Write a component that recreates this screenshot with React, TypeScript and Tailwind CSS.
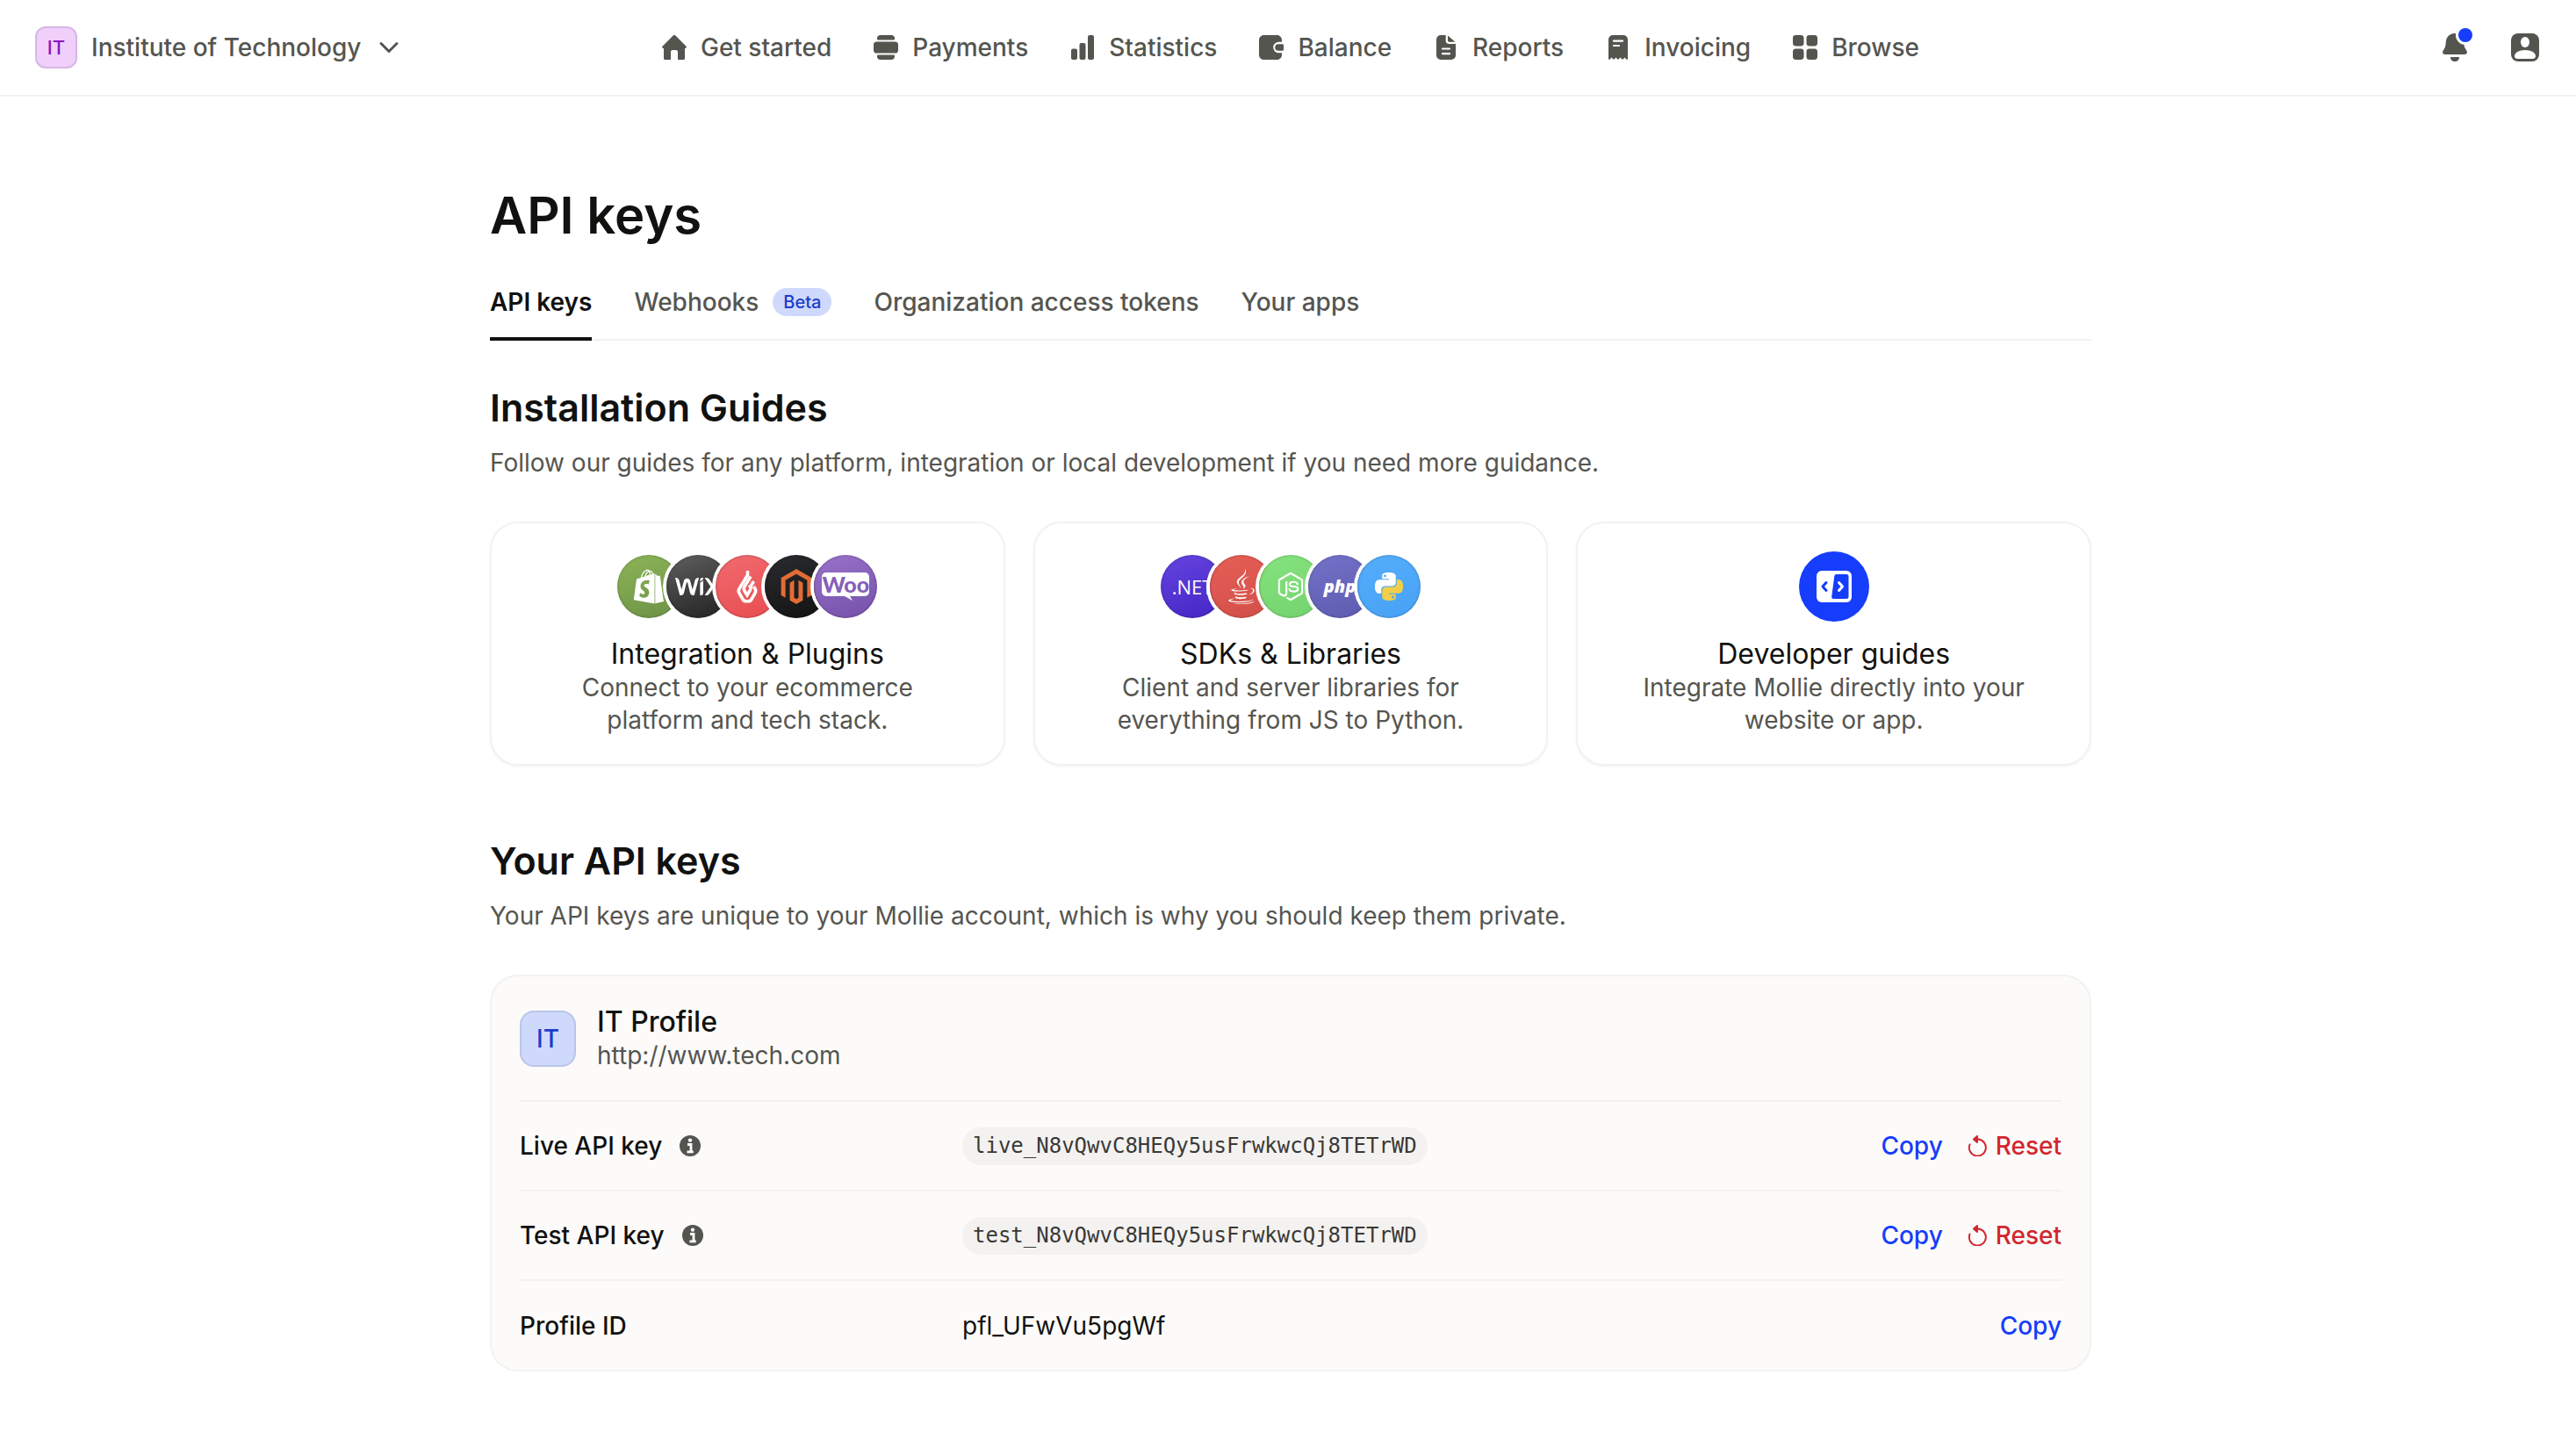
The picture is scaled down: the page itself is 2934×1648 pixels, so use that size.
import { ReactNode } from "react";
import { FaJava, FaMagento, FaShopify, FaWix } from "react-icons/fa";
import { SiNodedotjs } from "react-icons/si";

const HomeIcon = () => (
  <svg viewBox="0 0 28 28" className="size-7" fill="currentColor">
    <path d="M12.6.6a2 2 0 0 1 2.8 0l11.9 12a1.4 1.4 0 0 1-1 2.4H26v11.4c0 .9-.7 1.6-1.6 1.6H18v-9c0-1.2-.9-2-2-2h-4c-1.1 0-2 .8-2 2v9H3.6C2.700 28 2 27.300 2 26.400V15h-.3a1.400 1.400 0 0 1-1-2.400z" />
  </svg>
);

const PaymentsIcon = () => (
  <svg viewBox="0 0 28 28" className="size-7" fill="currentColor">
    <path d="M4 3.500C4 1.500 5.500 0 7.500 0h13c2 0 3.500 1.500 3.500 3.500V4.600a.9.9 0 0 1-.9.900H4.900a.9.9 0 0 1-.9-.9z" />
    <rect y="7.500" width="28" height="13" rx="3.600" />
    <path d="M4 23.400c0-.5.400-.9.900-.9h18.200c.5 0 .9.400.9.900v1.100c0 2-1.500 3.500-3.500 3.500h-13C5.500 28 4 26.500 4 24.500z" />
  </svg>
);

const StatisticsIcon = () => (
  <svg viewBox="0 0 28 28" className="size-7" fill="currentColor">
    <rect x="1" y="15.500" width="7" height="12.500" rx="2" />
    <rect x="10.500" y="9" width="7" height="19" rx="2" />
    <rect x="20" y="0" width="7" height="28" rx="2" />
  </svg>
);

const BalanceIcon = () => (
  <svg viewBox="0 0 28 28" className="size-7" fill="currentColor">
    <path d="M5.500 0h15C23.500 0 26 2.500 26 5.500v2.200h-3.500a6.300 6.300 0 0 0 0 12.600H26v2.200c0 3-2.500 5.500-5.500 5.500h-15A5.500 5.500 0 0 1 0 22.500v-17C0 2.500 2.500 0 5.500 0z" />
    <path d="M22 10.200h4.600c.8 0 1.400.6 1.400 1.400v4.800c0 .8-.6 1.400-1.400 1.400H22a3.800 3.800 0 0 1 0-7.600z" />
  </svg>
);

const ReportsIcon = () => (
  <svg viewBox="0 0 28 28" className="size-7" fill="currentColor">
    <path d="M8 0h5.700v6.500c0 2 1.600 3.500 3.500 3.500H25v13a5 5 0 0 1-5 5H8a5 5 0 0 1-5-5V5a5 5 0 0 1 5-5z" />
    <path d="M16 .4v6.200c0 .7.5 1.200 1.200 1.200h7.200z" />
    <path d="M10 15.500h8M10 21.200h8" stroke="#fff" strokeWidth="2.200" strokeLinecap="round" />
  </svg>
);

const InvoicingIcon = () => (
  <svg viewBox="0 0 28 28" className="size-7" fill="currentColor">
    <path d="M8 0h12a5 5 0 0 1 5 5v21.800c0 1-1 1.400-1.700.8L21.500 25.600 19 28l-2.500-2.400L14 28l-2.500-2.400L9 28l-2.500-2.400-1.800 2c-.7.6-1.700.2-1.700-.8V5a5 5 0 0 1 5-5z" />
    <path d="M9 6.700h10M9 12h6" stroke="#fff" strokeWidth="2.200" strokeLinecap="round" />
  </svg>
);

const BrowseIcon = () => (
  <svg viewBox="0 0 28 28" className="size-7" fill="currentColor">
    <rect width="12.500" height="12.500" rx="3.400" />
    <rect x="15.500" width="12.500" height="12.500" rx="3.400" />
    <rect y="15.500" width="12.500" height="12.500" rx="3.400" />
    <rect x="15.500" y="15.500" width="12.500" height="12.500" rx="3.400" />
  </svg>
);

const BellIcon = () => (
  <svg viewBox="0 0 28 32" className="h-8 w-7" fill="currentColor">
    <path d="M14 0c5.800 0 9.800 4.300 10.200 9.600.2 4 .6 6.200 2 8.200l1.300 2.200c1.200 2-.1 4-2.300 4H2.800c-2.200 0-3.500-2-2.300-4l1.300-2.200c1.400-2 1.800-4.200 2-8.200C4.200 4.300 8.200 0 14 0z" />
    <path d="M9 27h10c0 3-2 5-5 5s-5-2-5-5z" />
  </svg>
);

const UserIcon = () => (
  <svg viewBox="0 0 32 32" className="size-8">
    <rect width="32" height="32" rx="8" fill="currentColor" />
    <ellipse cx="16" cy="10" rx="5" ry="6" fill="#fff" />
    <path d="M4 26c0-4 5-7 12-7s12 3 12 7c0 1.800-1.500 3-3.500 3h-17C5.500 29 4 27.800 4 26z" fill="#fff" />
  </svg>
);

const InfoIcon = () => (
  <svg viewBox="0 0 24 24" className="size-6">
    <circle cx="12" cy="12" r="12" fill="#555550" />
    <circle cx="12" cy="5.600" r="2.200" fill="#fff" />
    <path d="M9 10.500h4v8M8.500 18.800h7.200" fill="none" stroke="#fff" strokeWidth="2.800" />
  </svg>
);

const ResetIcon = () => (
  <svg viewBox="0 0 24 24" className="size-6" fill="none" stroke="currentColor" strokeWidth="2" strokeLinecap="round" strokeLinejoin="round">
    <path d="M2.500 10.500A9.500 9.500 0 1 0 12 4.500H8" />
    <path d="M7 4.500 11 1v7z" fill="currentColor" />
  </svg>
);

const FlameLogo = () => (
  <svg viewBox="0 0 26 38" className="h-[38px] w-[26px]" fill="none" stroke="#fff" strokeWidth="3.600">
    <path d="M13.500 1v5L4 21.500c-1.200 2-1.200 3 0 5l4 7c1 1.700 1.800 2.300 3.500 2.300h3c1.700 0 2.500-.6 3.500-2.300l4-7c1.200-2 1.200-3 0-5l-1.500-2.500" />
    <path d="m17 7.500-7 11.700c-1.200 2-1.200 2.800 0 4.800l3 4.800 3.500-5.800c1-1.600 1-2.300 0-4l-1-1.500" />
    <path d="m20.500 13-4.500 7.500" />
  </svg>
);

const WooLogo = () => (
  <div className="relative flex h-8 w-[54px] justify-center">
    <svg viewBox="0 0 54 32" className="absolute inset-0 h-8 w-[54px]" fill="#fff">
      <path d="M5 0h44a5 5 0 0 1 5 5v17a5 5 0 0 1-5 5H32l3 5-9-5H5a5 5 0 0 1-5-5V5a5 5 0 0 1 5-5z" />
    </svg>
    <span className="relative font-['Lato'] text-[25px] leading-[27px] font-black text-[#8660bb]">Woo</span>
  </div>
);

const PythonLogo = () => (
  <svg viewBox="0 0 24 24" className="size-8">
    <path fill="#fff" d="M14.25.18l.9.2.73.26.59.3.45.32.34.34.25.34.16.33.1.3.04.26.02.2-.01.13V8.5l-.05.63-.13.55-.21.46-.26.38-.3.31-.33.25-.35.19-.35.14-.33.1-.3.07-.26.04-.21.02H8.77l-.69.05-.59.14-.5.22-.41.27-.33.32-.27.35-.2.36-.15.37-.1.35-.07.32-.04.27-.02.21v3.06H3.17l-.21-.03-.28-.07-.32-.12-.35-.18-.36-.26-.36-.36-.35-.46-.32-.59-.28-.73-.21-.88-.14-1.05-.05-1.23.06-1.22.16-1.04.24-.87.32-.71.36-.57.4-.44.42-.33.42-.24.4-.16.36-.1.32-.05.24-.01h.16l.06.01h8.16v-.83H6.18l-.01-2.75-.02-.37.05-.34.11-.31.17-.28.25-.26.31-.23.38-.2.44-.18.51-.15.58-.12.64-.1.71-.06.77-.04.84-.02 1.27.05zm-6.3 1.98l-.23.33-.08.41.08.41.23.34.33.22.41.09.41-.09.33-.22.23-.34.08-.41-.08-.41-.23-.33-.33-.22-.41-.09-.41.09z" />
    <path fill="#f0cf4b" d="M21.04 6.11l.28.06.32.12.35.18.36.27.36.35.35.47.32.59.28.73.21.88.14 1.04.05 1.23-.06 1.23-.16 1.04-.24.86-.32.71-.36.57-.4.45-.42.33-.42.24-.4.16-.36.09-.32.05-.24.02-.16-.01h-8.220v.82h5.840l.01 2.760.02.36-.05.34-.11.31-.17.29-.25.25-.31.24-.38.2-.44.17-.51.15-.58.13-.64.09-.71.07-.77.04-.84.01-1.270-.04-1.070-.14-.9-.2-.73-.25-.59-.3-.45-.33-.34-.34-.25-.34-.16-.33-.1-.3-.04-.25-.02-.2.01-.13v-5.340l.05-.64.13-.54.21-.46.26-.38.3-.32.33-.24.35-.2.35-.14.33-.1.3-.06.26-.04.21-.02.13-.01h5.840l.69-.05.59-.14.5-.21.41-.28.33-.32.27-.35.2-.36.15-.36.1-.35.07-.32.04-.28.02-.21V6.070h2.090l.14.01zm-6.470 14.250l-.23.33-.08.41.08.41.23.33.33.23.41.08.41-.08.33-.23.23-.33.08-.41-.08-.41-.23-.33-.33-.23-.41-.08-.41.08z" />
  </svg>
);

const CodeIcon = () => (
  <svg viewBox="0 0 40 36" className="h-9 w-10">
    <rect width="40" height="36" rx="6" fill="#fff" />
    <path d="M22.800 4H34a2.500 2.500 0 0 1 2.500 2.500v23A2.500 2.500 0 0 1 34 32H19.200a2 2 0 0 1-2-2.200L20.300 6a2.500 2.500 0 0 1 2.500-2z" fill="#163dfb" />
    <path d="M11 13.500 7 18l4 4.500" fill="none" stroke="#163dfb" strokeWidth="3" strokeLinecap="round" strokeLinejoin="round" />
    <path d="m25.500 13.500 4 4.500-4 4.500" fill="none" stroke="#fff" strokeWidth="3" strokeLinecap="round" strokeLinejoin="round" />
  </svg>
);

const navItems = [
  { label: 'Get started', icon: <HomeIcon /> },
  { label: 'Payments', icon: <PaymentsIcon /> },
  { label: 'Statistics', icon: <StatisticsIcon /> },
  { label: 'Balance', icon: <BalanceIcon /> },
  { label: 'Reports', icon: <ReportsIcon /> },
  { label: 'Invoicing', icon: <InvoicingIcon /> },
  { label: 'Browse', icon: <BrowseIcon /> },
]

const tabs = [
  { label: 'API keys', active: true },
  { label: 'Webhooks', badge: 'Beta' },
  { label: 'Organization access tokens' },
  { label: 'Your apps' },
]

const pluginLogos = [
  { key: 'shopify', bg: 'from-[#8db556] to-[#6c9148]', logo: <FaShopify className="size-10" /> },
  { key: 'wix', bg: 'from-[#606060] to-[#222222]', logo: <FaWix className="size-[52px]" /> },
  { key: 'lightspeed', bg: 'from-[#f06a70] to-[#e84c4f]', logo: <FlameLogo /> },
  { key: 'magento', bg: 'from-[#2a2c2f] to-[#121212]', logo: <FaMagento className="size-10 text-[#e26c35]" /> },
  { key: 'woo', bg: 'from-[#9a73cb] to-[#7450a8]', logo: <WooLogo /> },
]

const sdkLogos = [
  { key: 'net', bg: 'from-[#6543df] to-[#4524c4]', logo: <span className="font-['Open_Sans'] text-[22px] leading-none">.NET</span> },
  { key: 'java', bg: 'from-[#e65f57] to-[#d14f48]', logo: <FaJava className="size-10" /> },
  { key: 'node', bg: 'from-[#86e47f] to-[#73d26d]', logo: <SiNodedotjs className="size-8" /> },
  { key: 'php', bg: 'from-[#7472c8] to-[#5d5bb0]', logo: <span className="font-['Open_Sans'] text-[20px] leading-none font-extrabold italic">php</span> },
  { key: 'python', bg: 'from-[#55aefb] to-[#47a1f5]', logo: <PythonLogo /> },
]

const LogoStack = (props: { logos: { key: string, bg: string, logo: ReactNode }[] }) => {
  return (
    <div className="flex -space-x-4">
      {props.logos.map((item) => (
        <div key={item.key} className={`flex size-18 items-center justify-center rounded-full bg-linear-160 text-white ring-4 ring-white ${item.bg}`}>
          <div className="flex size-18 items-center justify-center rounded-full inset-shadow-[0_0_3px_rgba(0,0,0,0.3)]">{item.logo}</div>
        </div>
      ))}
    </div>
  )
}

const guides = [
  {
    title: 'Integration & Plugins',
    text: 'Connect to your ecommerce platform and tech stack.',
    visual: <LogoStack logos={pluginLogos} />,
  },
  {
    title: 'SDKs & Libraries',
    text: 'Client and server libraries for everything from JS to Python.',
    visual: <LogoStack logos={sdkLogos} />,
  },
  {
    title: 'Developer guides',
    text: 'Integrate Mollie directly into your website or app.',
    visual: (
      <div className="flex size-20 items-center justify-center rounded-full bg-[#163dfb]">
        <CodeIcon />
      </div>
    ),
  },
]

const apiKeys = [
  { label: 'Live API key', value: 'live_N8vQwvC8HEQy5usFrwkwcQj8TETrWD', secret: true },
  { label: 'Test API key', value: 'test_N8vQwvC8HEQy5usFrwkwcQj8TETrWD', secret: true },
  { label: 'Profile ID', value: 'pfl_UFwVu5pgWf', secret: false },
]

const Header = () => {
  return (
    <header className="grid h-[110px] grid-cols-[1fr_auto_1fr] items-center border-b-2 border-[#f2f2f1] pr-[42px] pl-10 font-medium text-[#555550]">
      <button className="flex items-center gap-4">
        <span className="flex size-12 items-center justify-center rounded-xl border-2 border-[#d8b6e4] bg-[#f0cffb] text-[22px] text-[#8a17bd]">IT</span>
        <span>Institute of Technology</span>
        <svg viewBox="0 0 32 32" className="size-8" fill="none" stroke="currentColor" strokeWidth="3" strokeLinecap="round" strokeLinejoin="round">
          <path d="m7 11.500 9 9 9-9" />
        </svg>
      </button>
      <nav className="flex items-center gap-12 pl-2">
        {navItems.map((item) => (
          <a key={item.label} href="#" className="flex items-center gap-4">
            {item.icon}
            {item.label}
          </a>
        ))}
      </nav>
      <div className="flex items-center justify-end gap-[50px]">
        <button className="relative" aria-label="Notifications">
          <BellIcon />
          <span className="absolute -top-1.5 -right-1.5 size-4 rounded-full bg-[#163dfb] ring-3 ring-white" />
        </button>
        <button aria-label="Account">
          <UserIcon />
        </button>
      </div>
    </header>
  )
}

const SectionTitle = (props: { title: string, text: string }) => {
  return (
    <>
      <h2 className="text-[43px] leading-14 font-semibold">{props.title}</h2>
      <p className="mt-[15px] leading-10 text-[#555550]">{props.text}</p>
    </>
  )
}

const KeysTable = () => {
  return (
    <table className="w-full table-fixed text-left">
      <tbody>
        {apiKeys.map((item) => (
          <tr key={item.label} className="h-[102px] border-t-2 border-[#f2f2f0]">
            <th scope="row" className="w-[504px] font-medium">
              <div className="flex items-center gap-5">
                {item.label}
                {item.secret && <InfoIcon />}
              </div>
            </th>
            <td>
              {item.secret
                ? <code className="inline-block rounded-full bg-[#f3f2f1] px-3 font-['DejaVu_Sans_Mono',monospace] text-[24px] leading-[43px] text-[#3a3936]">{item.value}</code>
                : item.value}
            </td>
            <td className="w-[320px] font-medium">
              <div className="flex items-center justify-end gap-7">
                <button className="text-[#163dfb]">Copy</button>
                {item.secret && (
                  <button className="flex items-center gap-2 text-[#d3262f]">
                    <ResetIcon />
                    Reset
                  </button>
                )}
              </div>
            </td>
          </tr>
        ))}
      </tbody>
    </table>
  )
}

const App = () => {
  return (
    <div className="min-h-screen bg-white font-['Inter',sans-serif] text-[28px] leading-9 text-[#111110]">
      <Header />
      <main className="mx-auto max-w-[1830px] pt-[99px] pb-20 pl-1.5">
        <h1 className="text-[58px] leading-18 font-semibold">API keys</h1>
        <nav className="mt-[45px] flex gap-12 border-b-2 border-[#f2f2f1] font-medium">
          {tabs.map((tab) => (
            <a
              key={tab.label}
              href="#"
              className={`-mb-0.5 flex items-center gap-4 border-b-4 pb-[22px] ${tab.active ? 'border-[#111110] font-semibold' : 'border-transparent text-[#555550]'}`}
            >
              {tab.label}
              {tab.badge && <span className="rounded-full bg-[#cfd9fc] px-3 text-[20px] leading-8 text-[#1a3ccd]">{tab.badge}</span>}
            </a>
          ))}
        </nav>

        <section className="mt-12">
          <SectionTitle title="Installation Guides" text="Follow our guides for any platform, integration or local development if you need more guidance." />
          <div className="mt-[47px] grid grid-cols-3 gap-8">
            {guides.map((guide) => (
              <a key={guide.title} href="#" className="flex flex-col items-center rounded-4xl border-2 border-[#f2f2f1] px-16 pt-8 pb-[31px] text-center shadow-sm shadow-black/5">
                <div className="flex h-20 items-center">{guide.visual}</div>
                <h3 className="mt-[17px] text-[32px] leading-10">{guide.title}</h3>
                <p className="leading-[37px] text-[#555550]">{guide.text}</p>
              </a>
            ))}
          </div>
        </section>

        <section className="mt-20">
          <SectionTitle title="Your API keys" text="Your API keys are unique to your Mollie account, which is why you should keep them private." />
          <div className="mt-[47px] rounded-4xl border-2 border-[#f2f2f0] bg-[#fcfbf9] px-8">
            <div className="flex items-center gap-6 py-8">
              <div className="flex size-16 items-center justify-center rounded-2xl border-2 border-[#b9c5ea] bg-[#cfd9fc] font-medium text-[#1a3ccd]">IT</div>
              <div>
                <h3 className="text-[32px] leading-10 font-medium">IT Profile</h3>
                <p className="leading-[37px] text-[#555550]">http://www.tech.com</p>
              </div>
            </div>
            <KeysTable />
          </div>
        </section>
      </main>
    </div>
  )
}

export default App;
